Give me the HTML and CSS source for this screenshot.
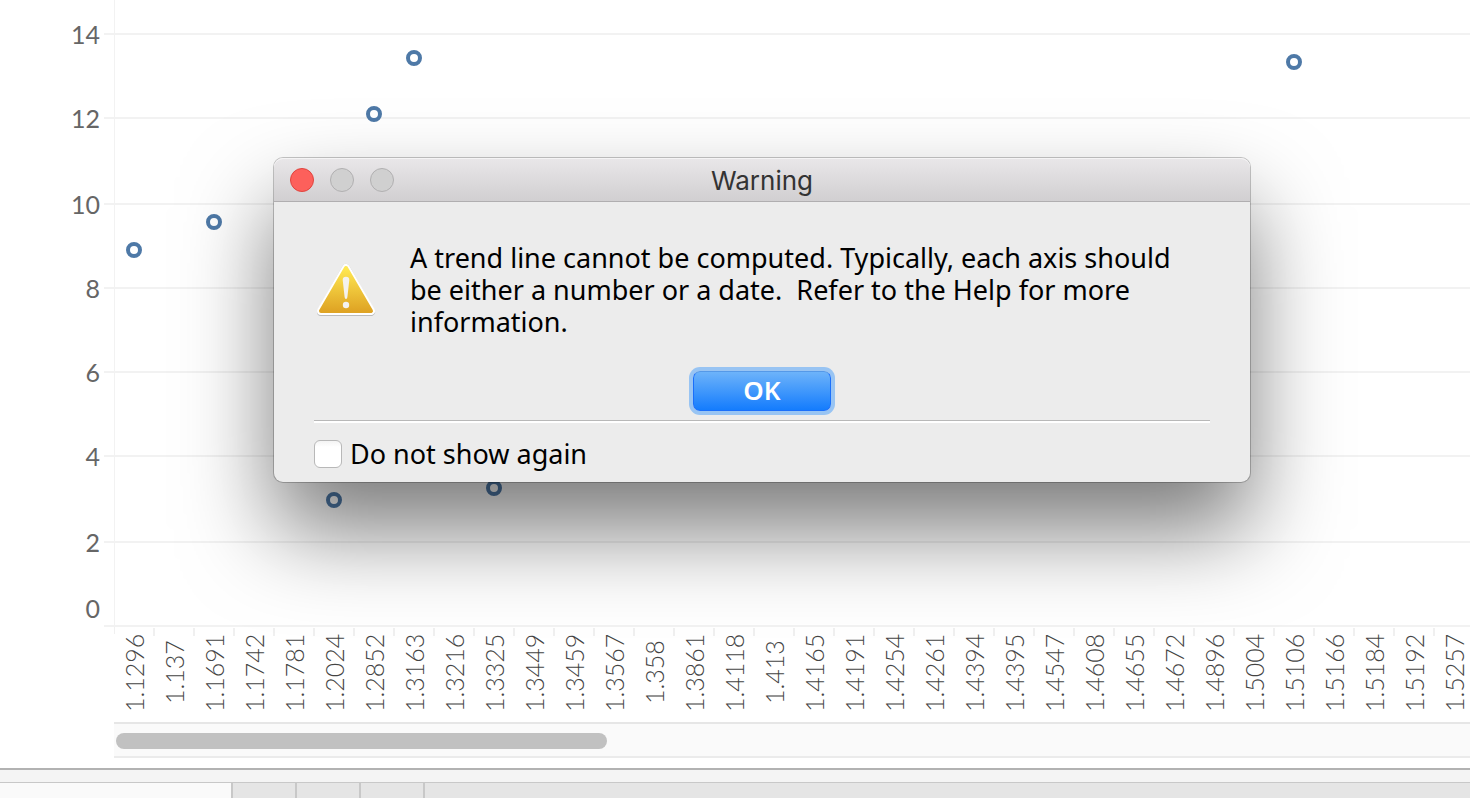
FILE: index.html
```
<!DOCTYPE html>
<html lang="en">
<head>
<meta charset="utf-8">
<title>Warning</title>
<link rel="stylesheet" href="styles.css">
</head>
<body>
<main class="sheet">
  <section class="chart" aria-label="Scatter plot">
    <div class="y-axis">
      <span class="y-label">14</span>
      <span class="y-label">12</span>
      <span class="y-label y-label-wide">10</span>
      <span class="y-label">8</span>
      <span class="y-label">6</span>
      <span class="y-label">4</span>
      <span class="y-label y-label-wide">2</span>
      <span class="y-label y-label-zero">0</span>
    </div>
    <div class="panel">
      <div class="plot">
        <div class="band band-top"></div>
        <div class="band"></div>
        <div class="band band-tall"></div>
        <div class="band"></div>
        <div class="band"></div>
        <div class="band"></div>
        <div class="band band-tall"></div>
        <div class="band"></div>
        <svg class="marks" aria-hidden="true">
          <circle cx="19" cy="250" r="6"/>
          <circle cx="99" cy="222" r="6"/>
          <circle cx="219" cy="500" r="6"/>
          <circle cx="259" cy="114" r="6"/>
          <circle cx="299" cy="58" r="6"/>
          <circle cx="379" cy="488" r="6"/>
          <circle cx="1179" cy="62" r="6"/>
        </svg>
      </div>
      <div class="x-axis">
        <span class="x-label">1.1296</span><span class="x-label">1.137</span><span class="x-label">1.1691</span><span class="x-label">1.1742</span><span class="x-label">1.1781</span><span class="x-label">1.2024</span><span class="x-label">1.2852</span><span class="x-label">1.3163</span><span class="x-label">1.3216</span><span class="x-label">1.3325</span><span class="x-label">1.3449</span><span class="x-label">1.3459</span><span class="x-label">1.3567</span><span class="x-label">1.358</span><span class="x-label">1.3861</span><span class="x-label">1.4118</span><span class="x-label">1.413</span><span class="x-label">1.4165</span><span class="x-label">1.4191</span><span class="x-label">1.4254</span><span class="x-label">1.4261</span><span class="x-label">1.4394</span><span class="x-label">1.4395</span><span class="x-label">1.4547</span><span class="x-label">1.4608</span><span class="x-label">1.4655</span><span class="x-label">1.4672</span><span class="x-label">1.4896</span><span class="x-label">1.5004</span><span class="x-label">1.5106</span><span class="x-label">1.5166</span><span class="x-label">1.5184</span><span class="x-label">1.5192</span><span class="x-label">1.5257</span>
      </div>
      <div class="scroll-track"><div class="scroll-thumb"></div></div>
    </div>
  </section>
  <footer class="status">
    <div class="tabs">
      <div class="tab tab-active"></div>
      <div class="tab"></div>
      <div class="tab"></div>
      <div class="tab"></div>
    </div>
  </footer>
</main>

<div class="dialog" role="dialog" aria-labelledby="dialog-title">
  <header class="titlebar">
    <div class="lights">
      <button class="light light-close" aria-label="Close"></button>
      <button class="light" aria-label="Minimize" disabled></button>
      <button class="light" aria-label="Zoom" disabled></button>
    </div>
    <h1 class="title" id="dialog-title">Warning</h1>
  </header>
  <div class="message-row">
    <svg class="warning-icon" viewBox="0 0 64 60" aria-hidden="true">
      <defs>
        <linearGradient id="gold" x1="0" y1="0" x2="0" y2="1">
          <stop offset="0" stop-color="#ffe852"/>
          <stop offset="1" stop-color="#dfa424"/>
        </linearGradient>
      </defs>
      <path class="icon-edge" d="M32 10 L57 54 H7 Z"/>
      <path class="icon-rim" d="M32 10 L57 53 H7 Z"/>
      <path class="icon-fill" d="M32 10 L57 53 H7 Z"/>
      <path class="icon-mark" d="M28.700 22 Q28.700 18.700 32 18.700 Q35.300 18.700 35.300 22 L33.400 39 Q33.200 41 32 41 Q30.800 41 30.600 39 Z"/>
      <circle class="icon-mark" cx="32" cy="47" r="3.200"/>
    </svg>
    <p class="message">A trend line cannot be computed. Typically, each axis should<br>be either a number or a date.&nbsp; Refer to the Help for more<br>information.</p>
  </div>
  <div class="actions"><button class="ok">OK</button></div>
  <div class="options">
    <input class="check" type="checkbox" id="hide-again">
    <label class="check-label" for="hide-again">Do not show again</label>
  </div>
</div>
</body>
</html>
```
FILE: styles.css
```
* { box-sizing: border-box; }

body {
  margin: 0;
  background: #fff;
  overflow: hidden;
  font-family: "Noto Sans", sans-serif;
}

.sheet {
  display: flex;
  flex-direction: column;
  height: 100vh;
}

/* Chart */
.chart {
  display: flex;
  padding-bottom: 10px;
  font-family: Lato, sans-serif;
  font-size: 25px;
  color: #666;
}

.y-axis {
  display: flex;
  flex-direction: column;
  gap: 48px;
  flex: 0 0 104px;
  padding: 16px 4px 0 0;
  text-align: right;
}

.y-label { line-height: 36px; }
.y-label-wide { margin-top: 2px; }
.y-label-zero { margin-top: -18px; }

.panel {
  flex: 1;
  min-width: 0;
  overflow: hidden;
}

.plot { position: relative; }

.plot::before {
  content: "";
  position: absolute;
  top: 0;
  bottom: 0;
  left: 10px;
  border-left: 1px solid #f2f2f2;
}

.band {
  height: 84px;
  border-bottom: 2px solid #f2f2f2;
}

.band-top { height: 35px; }
.band-tall { height: 86px; }

.marks {
  position: absolute;
  top: 0;
  left: 11px;
  width: calc(100% - 11px);
  height: 100%;
  fill: #fff;
  stroke: #4e79a7;
  stroke-width: 4px;
}

.x-axis {
  display: flex;
  height: 95px;
  margin-left: 10px;
  padding-top: 1px;
  border-left: 1px solid #f0f0f0;
  border-image: linear-gradient(#f0f0f0 8px, transparent 8px) 1;
}

.x-label {
  flex: 0 0 40px;
  display: flex;
  align-items: center;
  justify-content: center;
  padding-top: 5px;
  padding-left: 2px;
  line-height: 38px;
  font-weight: 300;
  color: #444;
  writing-mode: vertical-rl;
  transform: rotate(180deg);
  background: linear-gradient(#f0f0f0, #f0f0f0) left bottom / 2px 8px no-repeat;
}

.scroll-track {
  height: 36px;
  margin-left: 10px;
  padding: 9px 2px;
  background: #fafafa;
  border-top: 2px solid #e6e6e6;
  border-bottom: 2px solid #ebebeb;
}

.scroll-thumb {
  width: 491px;
  height: 16px;
  border-radius: 8px;
  background: #c1c1c1;
}

/* Bottom strip */
.status {
  flex: 1;
  display: flex;
  flex-direction: column;
  padding-top: 12px;
  background: #f4f4f4;
  border-top: 2px solid #b2b2b2;
}

.tabs {
  flex: 1;
  display: flex;
  background: #e5e5e5;
  border-top: 1px solid #c8c8c8;
}

.tab {
  width: 64px;
  border-right: 2px solid #c8c8c8;
}

.tab-active {
  width: 233px;
  background: #fafafa;
}

/* Dialog */
.dialog {
  position: absolute;
  top: 158px;
  left: 274px;
  width: 976px;
  background: #ececec;
  border-radius: 9px;
  color: #000;
  box-shadow: 0 0 0 1px rgba(0, 0, 0, 0.22), 0 48px 90px rgba(0, 0, 0, 0.52);
}

.titlebar {
  display: flex;
  align-items: center;
  height: 44px;
  padding: 0 16px;
  border-radius: 9px 9px 0 0;
  border-bottom: 1px solid #b0aeb0;
  background: linear-gradient(#e9e7e9, #d1cfd1);
  box-shadow: inset 0 1px #f5f4f5;
}

.lights {
  display: flex;
  gap: 16px;
  flex: 0 0 104px;
}

.light {
  width: 24px;
  height: 24px;
  padding: 0;
  border: 1px solid #b1b0b1;
  border-radius: 50%;
  background: #d0d0d0;
}

.light-close {
  border-color: #e0443e;
  background: #fd605b;
}

.title {
  flex: 1;
  margin: 0 104px 0 0;
  padding-top: 2px;
  font: 400 26px/32px Inter, sans-serif;
  color: #333;
  text-align: center;
}

.message-row {
  display: flex;
  gap: 32px;
  padding: 40px 40px 0;
}

.warning-icon {
  flex: 0 0 64px;
  height: 60px;
  margin-top: 16px;
}

.icon-edge,
.icon-rim {
  stroke-width: 8px;
  stroke-linejoin: round;
}

.icon-edge { fill: #bbb; stroke: #bbb; }
.icon-rim { fill: #fff; stroke: #fff; }

.icon-fill {
  fill: url(#gold);
  stroke: url(#gold);
  stroke-width: 4px;
  stroke-linejoin: round;
}

.icon-mark { fill: #f4f2ee; }

.message {
  margin: 0;
  font-size: 27px;
  line-height: 32px;
  white-space: nowrap;
}

.actions {
  display: flex;
  justify-content: center;
  margin: 33px 40px 0;
  padding-bottom: 9px;
  border-bottom: 1px solid #b8b8b8;
}

.ok {
  width: 138px;
  height: 40px;
  padding: 0 0 2px;
  border: 1px solid #1a6ffb;
  border-top-color: #5599e8;
  border-radius: 7px;
  background: linear-gradient(#6db3fa, #147cfd);
  box-shadow: 0 0 0 4px #98c4f3;
  font: 600 26px/36px "Noto Sans", sans-serif;
  color: #fff;
}

.options {
  display: flex;
  align-items: center;
  gap: 8px;
  margin: 0 40px;
  padding: 15px 0 12px;
  border-top: 2px solid #fff;
}

.check {
  appearance: none;
  width: 28px;
  height: 28px;
  margin: 0;
  border: 1px solid #b8b8b8;
  border-radius: 6px;
  background: linear-gradient(#f4f4f4, #fff 6px);
}

.check-label {
  font-size: 27px;
  line-height: 32px;
}
```
